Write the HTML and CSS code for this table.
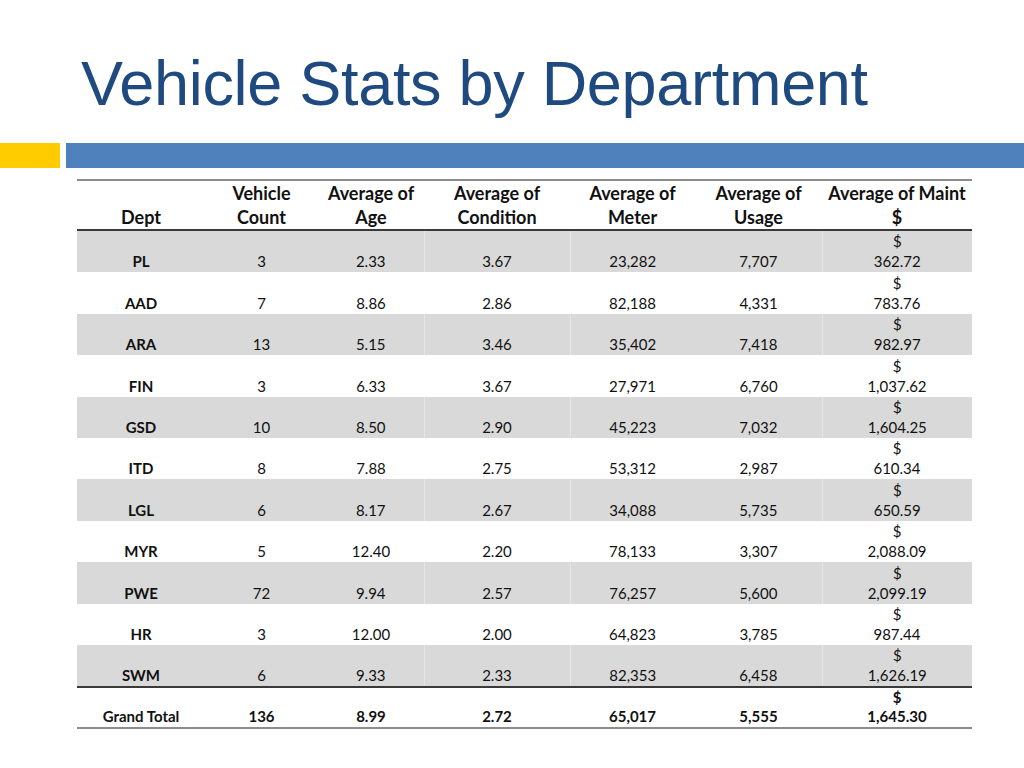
FILE: index.html
```html
<!DOCTYPE html>
<html>
<head>
<meta charset="utf-8">
<link rel="stylesheet" href="styles.css">
</head>
<body>
<div class="slide">
  <h1 class="title">Vehicle Stats by Department</h1>
  <div class="bars">
    <div class="bar-yellow"></div>
    <div class="bar-blue"></div>
  </div>
  <table class="stats">
    <colgroup>
      <col class="c1"><col class="c2"><col class="c3"><col class="c4"><col class="c5"><col class="c6"><col class="c7">
    </colgroup>
    <thead>
      <tr>
        <th>Dept</th>
        <th>Vehicle<br>Count</th>
        <th>Average of<br>Age</th>
        <th>Average of<br>Condition</th>
        <th>Average of<br>Meter</th>
        <th>Average of<br>Usage</th>
        <th>Average of Maint<br>$</th>
      </tr>
    </thead>
    <tbody>
      <tr class="shade"><td class="dept">PL</td><td>3</td><td>2.33</td><td>3.67</td><td>23,282</td><td>7,707</td><td>$<br>362.72</td></tr>
      <tr><td class="dept">AAD</td><td>7</td><td>8.86</td><td>2.86</td><td>82,188</td><td>4,331</td><td>$<br>783.76</td></tr>
      <tr class="shade"><td class="dept">ARA</td><td>13</td><td>5.15</td><td>3.46</td><td>35,402</td><td>7,418</td><td>$<br>982.97</td></tr>
      <tr><td class="dept">FIN</td><td>3</td><td>6.33</td><td>3.67</td><td>27,971</td><td>6,760</td><td>$<br>1,037.62</td></tr>
      <tr class="shade"><td class="dept">GSD</td><td>10</td><td>8.50</td><td>2.90</td><td>45,223</td><td>7,032</td><td>$<br>1,604.25</td></tr>
      <tr><td class="dept">ITD</td><td>8</td><td>7.88</td><td>2.75</td><td>53,312</td><td>2,987</td><td>$<br>610.34</td></tr>
      <tr class="shade"><td class="dept">LGL</td><td>6</td><td>8.17</td><td>2.67</td><td>34,088</td><td>5,735</td><td>$<br>650.59</td></tr>
      <tr><td class="dept">MYR</td><td>5</td><td>12.40</td><td>2.20</td><td>78,133</td><td>3,307</td><td>$<br>2,088.09</td></tr>
      <tr class="shade"><td class="dept">PWE</td><td>72</td><td>9.94</td><td>2.57</td><td>76,257</td><td>5,600</td><td>$<br>2,099.19</td></tr>
      <tr><td class="dept">HR</td><td>3</td><td>12.00</td><td>2.00</td><td>64,823</td><td>3,785</td><td>$<br>987.44</td></tr>
      <tr class="shade"><td class="dept">SWM</td><td>6</td><td>9.33</td><td>2.33</td><td>82,353</td><td>6,458</td><td>$<br>1,626.19</td></tr>
      <tr class="total"><td class="dept">Grand Total</td><td>136</td><td>8.99</td><td>2.72</td><td>65,017</td><td>5,555</td><td>$<br>1,645.30</td></tr>
    </tbody>
  </table>
</div>
</body>
</html>
```
FILE: styles.css
```css
html, body {
  margin: 0;
  padding: 0;
  background: #ffffff;
}
.slide {
  width: 1024px;
  height: 768px;
  overflow: hidden;
}
.title {
  margin: 0;
  padding: 52px 0 0 81px;
  font-family: "Liberation Sans", Arial, sans-serif;
  font-weight: normal;
  font-size: 63px;
  line-height: 63px;
  color: #1f4a80;
  height: 38px;
  letter-spacing: -0.3px;
}
.bars {
  display: flex;
  gap: 6px;
  margin-top: 53px;
  height: 25px;
}
.bar-yellow {
  width: 60px;
  background: #ffcc00;
}
.bar-blue {
  flex: 1;
  background: #4f81bd;
}
.stats {
  margin: 11px 0 0 77px;
  width: 895px;
  table-layout: fixed;
  border-collapse: collapse;
  font-family: Lato, "Open Sans", sans-serif;
  color: #111;
}
.c1 { width: 128px; }
.c2 { width: 113px; }
.c3 { width: 106px; }
.c4 { width: 146px; }
.c5 { width: 125px; }
.c6 { width: 127px; }
.c7 { width: 150px; }
.stats th {
  font-size: 18px;
  font-weight: bold;
  line-height: 24px;
  vertical-align: bottom;
  text-align: center;
  padding: 0;
  height: 45px;
  border-top: 2px solid #8c8c8c;
  border-bottom: 2px solid #3a3a3a;
}
.stats td {
  font-size: 15px;
  line-height: 20px;
  text-align: center;
  vertical-align: bottom;
  padding: 0 0 1px 0;
  height: 40.4px;
}
.stats td.dept {
  font-weight: bold;
}
.stats tr.shade td {
  background: #d9d9d9;
}
.stats tr.shade td:nth-child(4),
.stats tr.shade td:nth-child(5),
.stats tr.shade td:nth-child(7) {
  border-left: 1px solid #e6e6e6;
}
.stats tr.total td {
  font-weight: bold;
  line-height: 19px;
  padding: 0 0 1px 0;
  height: 38px;
  border-top: 2px solid #3a3a3a;
  border-bottom: 2px solid #8c8c8c;
}
```
